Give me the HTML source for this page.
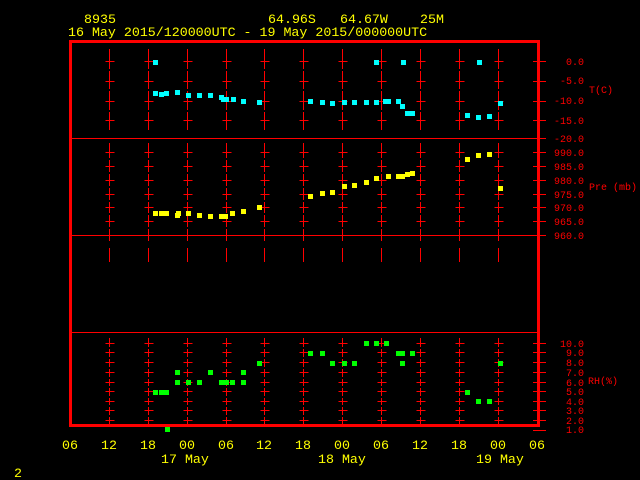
<!DOCTYPE html>
<html><head><style>
body{margin:0;background:#000;width:640px;height:480px;overflow:hidden}
svg{display:block}
text{font-family:"Liberation Mono",monospace}
line{shape-rendering:crispEdges}
</style></head><body>
<svg id="s" width="640" height="480" xmlns="http://www.w3.org/2000/svg">
<rect width="640" height="480" fill="#000"/>
<g fill="#ffff00" font-size="13.3">
<text x="84" y="23">8935</text>
<text x="268" y="23">64.96S</text>
<text x="340" y="23">64.67W</text>
<text x="420" y="23">25M</text>
<text x="68" y="36">16 May 2015/120000UTC - 19 May 2015/000000UTC</text>
<text x="62" y="449">06</text><text x="101" y="449">12</text><text x="140" y="449">18</text>
<text x="179" y="449">00</text><text x="218" y="449">06</text><text x="256" y="449">12</text>
<text x="295" y="449">18</text><text x="334" y="449">00</text><text x="373" y="449">06</text>
<text x="412" y="449">12</text><text x="451" y="449">18</text><text x="490" y="449">00</text>
<text x="529" y="449">06</text>
<text x="161" y="463">17 May</text><text x="318" y="463">18 May</text><text x="476" y="463">19 May</text>
<text x="14" y="477">2</text>
</g>
<g fill="#ff0000" font-size="10" text-anchor="end">
<text x="584" y="65">0.0</text><text x="584" y="84">-5.0</text><text x="584" y="104">-10.0</text>
<text x="584" y="124">-15.0</text><text x="584" y="142">-20.0</text>
<text x="584" y="156">990.0</text><text x="584" y="170">985.0</text><text x="584" y="184">980.0</text>
<text x="584" y="198">975.0</text><text x="584" y="211">970.0</text><text x="584" y="225">965.0</text>
<text x="584" y="239">960.0</text>
<text x="584" y="347">10.0</text><text x="584" y="356">9.0</text><text x="584" y="366">8.0</text>
<text x="584" y="376">7.0</text><text x="584" y="386">6.0</text><text x="584" y="395">5.0</text>
<text x="584" y="405">4.0</text><text x="584" y="414">3.0</text><text x="584" y="424">2.0</text>
<text x="584" y="433">1.0</text>
</g>
<g fill="#ff0000" font-size="10">
<text x="589" y="93">T(C)</text>
<text x="589" y="190">Pre (mb)</text>
<text x="588" y="384">RH(%)</text>
</g>
<g id="grid" stroke="#ff0000" stroke-width="1"></g>
<g id="pts"></g>
<rect x="70.5" y="41.5" width="468" height="384" fill="none" stroke="#ff0000" stroke-width="3"/>
</svg>
<script>
var NS="http://www.w3.org/2000/svg",g=document.getElementById("grid"),p=document.getElementById("pts");
function L(x1,y1,x2,y2){var l=document.createElementNS(NS,"line");l.setAttribute("x1",x1);l.setAttribute("y1",y1);l.setAttribute("x2",x2);l.setAttribute("y2",y2);g.appendChild(l);}
var xs=[109,148,187,226,264,303,342,381,420,459,498];
var T=[61,81,101,120],P=[152,166,180,194,207,221],R=[343,352,362,372,382,391,401,410,420];
var segs=[[49,69],[71,89],[91,110],[112,130],[143,158],[160,172],[174,186],[188,200],[202,213],[215,227],[229,241],[248,262],[338,347],[349,357],[359,367],[369,377],[379,386],[388,396],[398,405],[407,415],[417,424]];
xs.forEach(function(x){x+=.5;segs.forEach(function(s){L(x,s[0],x,s[1]);});
T.concat(P,R).forEach(function(y){L(x-4,y+.5,x+5,y+.5);});});
T.concat(P,R,[138,235,430]).forEach(function(y){L(533,y+.5,546,y+.5);});
L(70,138.5,546,138.5);L(70,235.5,546,235.5);L(70,332.5,539,332.5);
function S(c,a){a.forEach(function(q){var r=document.createElementNS(NS,"rect");r.setAttribute("x",q[0]-2);r.setAttribute("y",q[1]-2);r.setAttribute("width",5);r.setAttribute("height",5);r.setAttribute("fill",c);p.appendChild(r);});}
S("#00ffff",[[155,62],[155,93],[161,94],[166,93],[177,92],[188,95],[199,95],[210,95],[221,97],[223,99],[226,99],[233,99],[243,101],[259,102],[310,101],[322,102],[332,103],[344,102],[354,102],[366,102],[376,102],[376,62],[385,101],[388,101],[398,101],[402,106],[403,62],[407,113],[412,113],[467,115],[478,117],[479,62],[489,116],[500,103]]);
S("#ffff00",[[155,213],[161,213],[166,213],[177,215],[178,213],[188,213],[199,215],[210,216],[221,216],[225,216],[232,213],[243,211],[259,207],[310,196],[322,193],[332,192],[344,186],[354,185],[366,182],[376,178],[388,176],[398,176],[402,176],[407,174],[412,173],[467,159],[478,155],[489,154],[500,188]]);
S("#00ff00",[[155,392],[161,392],[166,392],[177,372],[177,382],[188,382],[199,382],[210,372],[221,382],[226,382],[232,382],[243,372],[243,382],[259,363],[310,353],[322,353],[332,363],[344,363],[354,363],[366,343],[376,343],[386,343],[398,353],[402,353],[402,363],[412,353],[467,392],[478,401],[489,401],[500,363],[167,429]]);
</script>
</body></html>
